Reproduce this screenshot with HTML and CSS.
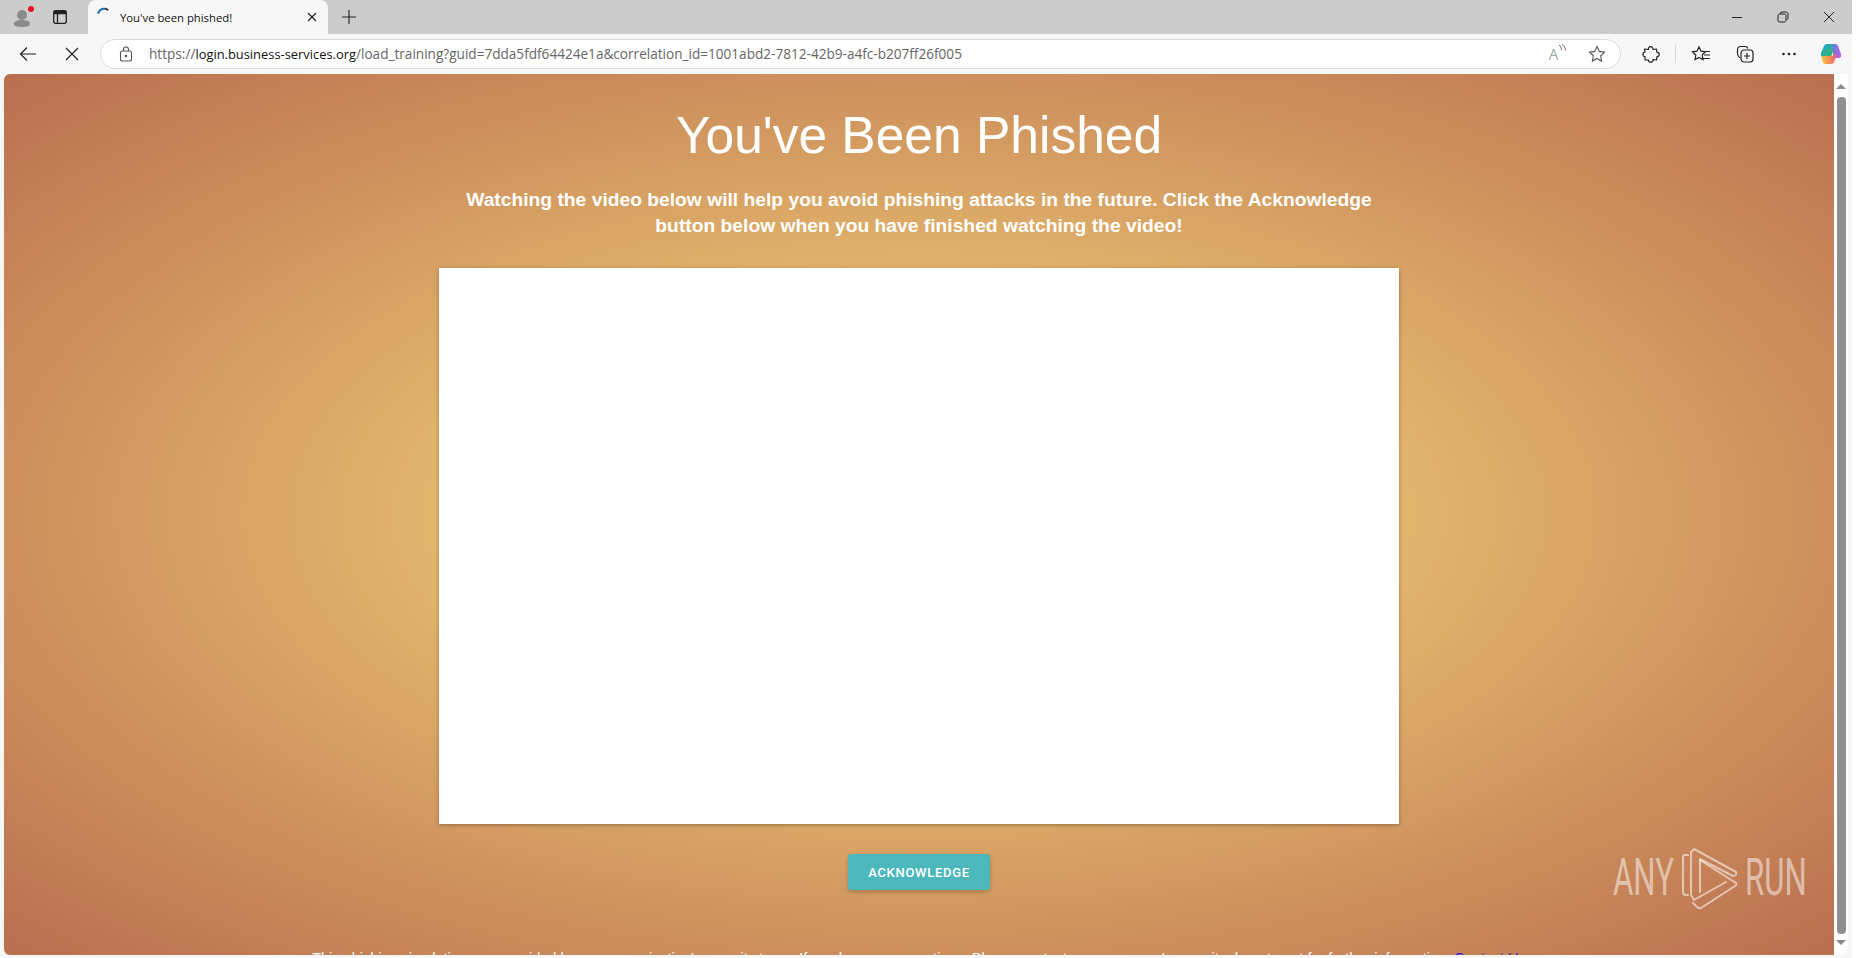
FILE: index.html
```html
<!DOCTYPE html>
<html lang="en">
<head>
  <meta charset="UTF-8" />
  <title>You've been phished!</title>
  <link rel="stylesheet" href="styles.css">
</head>
<body>
  <div class="window">
    <!-- Tab strip -->
    <div class="tabstrip">
      <div class="profile">
        <svg width="24" height="24" viewBox="0 0 24 24">
          <circle cx="12" cy="10" r="5" fill="#8a8a8a"/>
          <path d="M4 19c0-3 3-4 8-4s8 1 8 4c0 2-3 3-8 3s-8-1-8-3z" fill="#8a8a8a"/>
          <circle cx="21" cy="4" r="3" fill="#e81123"/>
        </svg>
      </div>
      <div class="tab-toggle">
        <svg width="16" height="16" viewBox="0 0 16 16" fill="none" stroke="#222" stroke-width="1.300">
          <rect x="1.700" y="1.700" width="12.600" height="12.600" rx="2"/>
          <path d="M2 4.500h12M5.500 4.500v9.500" />
          <path d="M2 3h12" stroke-width="2"/>
        </svg>
      </div>
      <div class="tab">
        <svg class="spinner" width="16" height="16" viewBox="0 0 16 16" fill="none">
          <path d="M2 8.500C3.500 5 6.500 3.500 9 3.800" stroke="#1f6fa8" stroke-width="2.200"/>
          <path d="M9 3.800c1.200.1 2.300.6 3.200 1.300" stroke="#3a3f4a" stroke-width="2"/>
        </svg>
        <span class="tab-title">You've been phished!</span>
        <svg class="tab-close" width="10" height="10" viewBox="0 0 10 10" stroke="#222" stroke-width="1.200">
          <path d="M1 1l8 8M9 1l-8 8"/>
        </svg>
      </div>
      <div class="new-tab">
        <svg width="16" height="16" viewBox="0 0 16 16" stroke="#222" stroke-width="1.100">
          <path d="M8 1v14M1 8h14"/>
        </svg>
      </div>
      <div class="win-controls">
        <svg width="12" height="12" viewBox="0 0 12 12" stroke="#222" stroke-width="1"><path d="M1 6.500h10"/></svg>
        <svg width="12" height="12" viewBox="0 0 12 12" fill="none" stroke="#222" stroke-width="1">
          <rect x="1" y="3" width="8" height="8" rx="1.500"/>
          <path d="M3.500 3V2.300C3.500 1.500 4 1 4.800 1h4.400C10.200 1 11 1.800 11 2.800v4.400c0 .8-.5 1.300-1.500 1.300"/>
        </svg>
        <svg width="12" height="12" viewBox="0 0 12 12" stroke="#222" stroke-width="1"><path d="M1 1l10 10M11 1L1 11"/></svg>
      </div>
    </div>

    <!-- Address bar -->
    <div class="toolbar">
      <svg class="nav-back" width="18" height="18" viewBox="0 0 18 18" fill="none" stroke="#222" stroke-width="1.200">
        <path d="M17 9H1.500M8 2.500L1.500 9 8 15.500"/>
      </svg>
      <svg class="nav-stop" width="14" height="14" viewBox="0 0 14 14" stroke="#222" stroke-width="1.200">
        <path d="M1 1l12 12M13 1L1 13"/>
      </svg>
      <div class="address">
        <svg class="lock" width="14" height="16" viewBox="0 0 14 16" fill="none" stroke="#555" stroke-width="1.100">
          <rect x="1.500" y="5" width="11" height="10" rx="2"/>
          <path d="M4.500 5V3.500a2.500 2.500 0 0 1 5 0V5"/>
          <circle cx="7" cy="10" r=".8" fill="#555"/>
        </svg>
        <span class="url"><span class="url-dim">https://</span><span class="url-host">login.business-services.org</span><span class="url-dim">/load_training?guid=7dda5fdf64424e1a&amp;correlation_id=1001abd2-7812-42b9-a4fc-b207ff26f005</span></span>
        <span class="read-aloud">A<svg width="9" height="11" viewBox="0 0 9 11" fill="none" stroke="#666" stroke-width="1"><path d="M1 1c1.500 1 2.500 2.500 2.500 5M4 .5c2 1.200 3.500 3.500 3.500 6"/></svg></span>
        <svg class="fav-star" width="18" height="18" viewBox="0 0 18 18" fill="none" stroke="#555" stroke-width="1.100">
          <path d="M9 1.500l2.300 4.900 5.200.7-3.800 3.700.9 5.300L9 13.500l-4.600 2.600.9-5.300L1.500 7.100l5.200-.7z"/>
        </svg>
      </div>
      <div class="tools">
        <svg width="18" height="18" viewBox="0 0 18 18" fill="none" stroke="#222" stroke-width="1.200" stroke-linejoin="round">
          <path d="M6.500 4.500C5.500 1 11.500.5 11 4.500l3.500-.5.500 3.500c3-.5 3 4.500 0 4l-.5 3.500-3.500-.5c.5 3.500-5 3.500-4.500.5L3 15v-3.500c-2.500.5-3-4 0-4.500l-.5-3z"/>
        </svg>
        <span class="tool-sep"></span>
        <svg width="20" height="18" viewBox="0 0 20 18" fill="none" stroke="#222" stroke-width="1.200">
          <path d="M8 2l2 4.200 4.500.6-3.300 3.200.8 4.600L8 12.400l-4 2.200.8-4.600L1.500 6.800 6 6.200z"/>
          <path d="M14 6.500h5M13 10h6M12 13.500h7"/>
        </svg>
        <svg width="18" height="18" viewBox="0 0 18 18" fill="none" stroke="#222" stroke-width="1.200">
          <path d="M4 13C2.500 12 1.500 10 1.500 8V4.500c0-1.800 1.200-3 3-3H9c1.500 0 2.500.8 3 2"/>
          <rect x="5" y="5" width="12" height="12" rx="3"/>
          <path d="M11 8v6M8 11h6"/>
        </svg>
        <svg class="tool-dots" width="16" height="18" viewBox="0 0 16 18" fill="#222">
          <circle cx="2.500" cy="9" r="1.300"/><circle cx="8" cy="9" r="1.300"/><circle cx="13.500" cy="9" r="1.300"/>
        </svg>
        <svg class="copilot" width="22" height="22" viewBox="0 0 22 22">
          <defs>
            <linearGradient id="cpA" x1="0" y1="0" x2="1" y2="1"><stop offset="0" stop-color="#1ea4dc"/><stop offset="1" stop-color="#3bb54a"/></linearGradient>
            <linearGradient id="cpB" x1="0" y1="0" x2="1" y2="1"><stop offset="0" stop-color="#5f7cf0"/><stop offset="1" stop-color="#d45ce0"/></linearGradient>
            <linearGradient id="cpC" x1="0" y1="0" x2="1" y2="0"><stop offset="0" stop-color="#f4c430"/><stop offset="1" stop-color="#ef5f7a"/></linearGradient>
          </defs>
          <path d="M7 1h6c1 0 1.500.5 2 2L11 14H3C1 14 .5 12 1 10l3-7c.5-1.300 1.500-2 3-2z" fill="url(#cpA)"/>
          <path d="M13 1h2c2 0 3 1 3.500 3L21 11c.5 2 0 4-2 4h-6z" fill="url(#cpB)"/>
          <path d="M3 13h9l3-2c1 0 1.500 1 1 2l-1.500 5c-.5 2-2 3-3.500 3H6c-2 0-3-1-3.500-3L1.500 14z" fill="url(#cpC)"/>
        </svg>
      </div>
    </div>

    <!-- Page -->
    <div class="viewport">
      <main class="page">
        <h1 class="page-title">You've Been Phished</h1>
        <p class="page-lead">Watching the video below will help you avoid phishing attacks in the future. Click the Acknowledge button below when you have finished watching the video!</p>
        <div class="video"></div>
        <button class="ack-btn">Acknowledge</button>
        <p class="page-foot">This phishing simulation was provided by your organization's security team. If you have any questions, Please contact your company's security department for further information, <a href="#">Contact Us</a></p>

        <div class="watermark">
          <span class="wm-text">ANY</span>
          <svg width="58" height="64" viewBox="4 6 58 64" fill="none" stroke="#fff" stroke-opacity=".55" stroke-width="2" stroke-linejoin="round" stroke-linecap="round">
            <path d="M11 15H8Q6 15 6 18V52Q6 55 9 55H11"/>
            <path d="M49 42L17 60L14 55V12L17 9L59 32Q60 36 56 36L23 19V52"/>
            <path d="M23 20L59 43Q60 45 58 46L24 68Q22 69 20 67L16 63"/>
          </svg>
          <span class="wm-text">RUN</span>
        </div>
      </main>
      <div class="scrollbar">
        <span class="sb-up"></span>
        <span class="sb-thumb"></span>
        <span class="sb-down"></span>
      </div>
    </div>
  </div>
</body>
</html>
```

FILE: styles.css
```css
/* General Styles */
html,
body {
  margin: 0;
  padding: 0;
  height: 100%;
  overflow: hidden;
  background-color: #fff;
}

.window {
  width: 1852px;
  height: 958px;
  display: flex;
  flex-direction: column;
  font-family: 'Open Sans', 'Liberation Sans', sans-serif;
  background-color: #f7f7f7;
}

/* Tab strip */
.tabstrip {
  height: 34px;
  display: flex;
  align-items: center;
  background-color: #cccccc;
  flex: none;
}

.profile {
  width: 24px;
  margin-left: 10px;
  display: flex;
}

.tab-toggle {
  margin-left: 18px;
  display: flex;
}

.tab {
  width: 240px;
  height: 34px;
  margin-left: 20px;
  padding: 0 11px 0 8px;
  box-sizing: border-box;
  display: flex;
  align-items: center;
  background-color: #f7f7f7;
  border-radius: 8px 8px 0 0;
  font-size: 11.300px;
  color: #111;
}

.spinner {
  margin-top: -8px;
}

.tab-title {
  margin-left: 8px;
  flex: 1;
}

.new-tab {
  margin-left: 13px;
  display: flex;
}

.win-controls {
  margin-left: auto;
  padding-right: 17px;
  display: flex;
  gap: 34px;
}

/* Address bar */
.toolbar {
  height: 40px;
  display: flex;
  align-items: center;
  flex: none;
}

.nav-back {
  margin-left: 19px;
}

.nav-stop {
  margin-left: 28px;
}

.address {
  width: 1521px;
  height: 30px;
  margin-left: 21px;
  flex: none;
  display: flex;
  align-items: center;
  box-sizing: border-box;
  background-color: #fff;
  border: 1px solid #d5dde0;
  border-radius: 15px;
  padding: 0 14px 0 18px;
}

.url {
  margin-left: 16px;
  padding-bottom: 2px;
  white-space: nowrap;
  flex: 1;
}

.url-dim {
  color: #666;
  font-size: 13.600px;
}

.url-host {
  color: #111;
  font-size: 12.900px;
}

.read-aloud {
  font-size: 15px;
  font-weight: 300;
  color: #666;
  display: flex;
  margin-right: 21px;
}

.tools {
  display: flex;
  align-items: center;
  margin-left: 21px;
  gap: 25px;
}

.tool-sep {
  width: 1px;
  height: 18px;
  background-color: #d8d8d8;
  margin: 0 -10px;
}

.tool-dots {
  margin: 0 -2px 0 2px;
}

/* Page */
.viewport {
  flex: 1;
  min-height: 0;
  display: flex;
  padding: 0 4px 3px 4px;
  background-color: #f7f7f7;
}

.page {
  position: relative;
  width: 1830px;
  overflow: hidden;
  border-radius: 6px 0 0 6px;
  display: flex;
  flex-direction: column;
  align-items: center;
  box-sizing: border-box;
  padding-top: 31px;
  color: #fff;
  font-family: 'Liberation Sans', Arial, sans-serif;
  background: radial-gradient(ellipse at center, #fbdf7c 0%, #b96e4f 100%);
}

.page-title {
  margin: 0;
  font-size: 51.500px;
  line-height: 60px;
  font-weight: 400;
}

.page-lead {
  width: 960px;
  margin: 22px 0 0;
  font-size: 19.250px;
  line-height: 26px;
  font-weight: 700;
  text-align: center;
}

.video {
  width: 960px;
  height: 556px;
  margin-top: 29px;
  flex: none;
  background-color: #fff;
  box-shadow: 0 1px 4px rgba(0, 0, 0, 0.3);
}

.ack-btn {
  width: 142px;
  height: 36px;
  margin-top: 30px;
  flex: none;
  border: none;
  border-radius: 3px;
  background-color: #4db8bb;
  color: #fff;
  font-family: Roboto, 'Liberation Sans', sans-serif;
  font-size: 13px;
  font-weight: 500;
  letter-spacing: 0.7px;
  text-transform: uppercase;
  box-shadow: 0 2px 4px rgba(0, 0, 0, 0.2);
}

.page-foot {
  width: 1240px;
  margin: 58px 0 0;
  flex: none;
  font-size: 14.500px;
  line-height: 20px;
  text-align: center;
  white-space: nowrap;
}

.page-foot a {
  color: #2a1fd0;
}

/* ANY.RUN watermark */
.watermark {
  position: absolute;
  right: 27px;
  bottom: 45px;
  display: flex;
  align-items: center;
  gap: 6px;
}

.wm-text {
  width: 62px;
  font-family: Roboto, 'Liberation Sans', sans-serif;
  font-size: 52px;
  font-weight: 400;
  line-height: 52px;
  color: rgba(255, 255, 255, 0.5);
  white-space: nowrap;
  transform: scaleX(0.6);
  transform-origin: left center;
}

/* Scrollbar */
.scrollbar {
  width: 14px;
  display: flex;
  flex-direction: column;
  align-items: center;
  background-color: #fff;
  border-radius: 0 0 6px 0;
}

.sb-up,
.sb-down {
  width: 0;
  height: 0;
  margin: 10px 0 6px;
  border-left: 5px solid transparent;
  border-right: 5px solid transparent;
  flex: none;
}

.sb-up {
  border-bottom: 5px solid #8a8a8a;
}

.sb-down {
  border-top: 5px solid #8a8a8a;
  margin: 6px 0 10px;
}

.sb-thumb {
  width: 9px;
  flex: 1;
  margin-top: 2px;
  border-radius: 4px;
  background-color: #8f8f8f;
}
```
